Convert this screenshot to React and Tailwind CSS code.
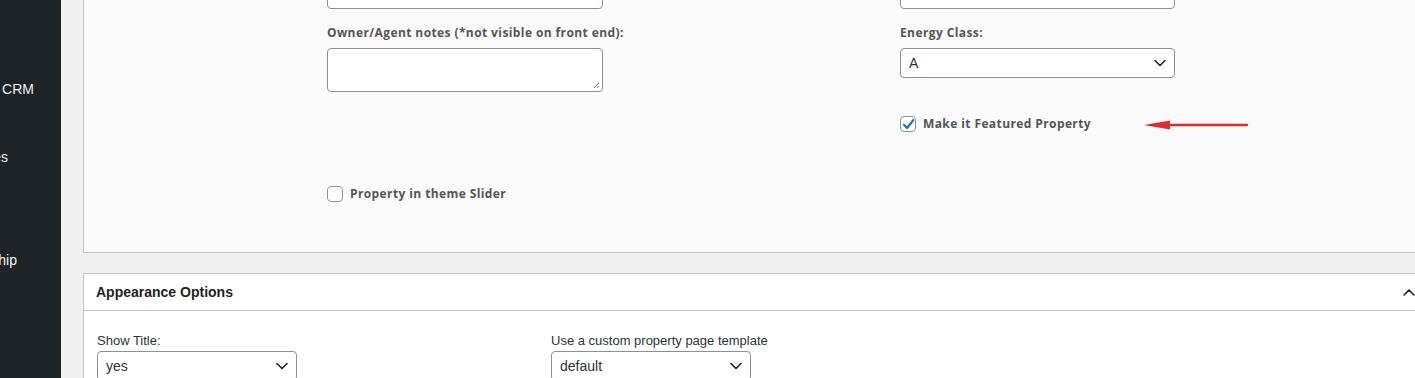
import React from "react";

const labelFont = { fontFamily: '"Open Sans", "DejaVu Sans", sans-serif' };

function Chevron({ up = false, className = "" }) {
  return (
    <svg width="12" height="8" viewBox="0 0 12 8" className={className} fill="none">
      <path
        d={up ? "M1 7 L6 2 L11 7" : "M1 1.5 L6 6.5 L11 1.5"}
        stroke="#1d2327"
        strokeWidth="1.6"
        strokeLinecap="round"
        strokeLinejoin="round"
      />
    </svg>
  );
}

function Select({ value, width }) {
  return (
    <div
      className={`${width} h-[30px] bg-white border border-[#8c8f94] rounded-[4px] flex items-center justify-between pl-[8px] pr-[8px] text-[14px] text-[#2c3338] font-['Liberation_Sans',sans-serif]`}
    >
      <span>{value}</span>
      <Chevron />
    </div>
  );
}

function Checkbox({ checked, label }) {
  return (
    <label className="flex items-center gap-[7px]">
      <span className="w-[16px] h-[16px] bg-white border border-[#8c8f94] rounded-[4px] flex items-center justify-center">
        {checked && (
          <svg width="13" height="13" viewBox="0 0 13 13">
            <path
              d="M2 6.8 L5 10 L11.2 2.2"
              stroke="#2271b1"
              strokeWidth="2.2"
              fill="none"
              strokeLinecap="round"
              strokeLinejoin="round"
            />
          </svg>
        )}
      </span>
      <span className="text-[12px] font-bold tracking-[0.4px] text-[#555] leading-[14px]" style={labelFont}>
        {label}
      </span>
    </label>
  );
}

export default function App() {
  return (
    <div className="flex w-[1415px] h-[378px] overflow-hidden bg-[#f0f0f1] font-['Liberation_Sans',sans-serif]">
      {/* collapsed admin menu, text cut at the left edge */}
      <aside className="w-[61px] shrink-0 bg-[#1d2327] text-[#f0f0f1] text-[14px]">
        <div className="mt-[80px] w-[34px] h-[18px] flex justify-end overflow-hidden whitespace-nowrap leading-[18px]">
          Estate CRM
        </div>
        <div className="mt-[50px] w-[8px] h-[18px] flex justify-end overflow-hidden whitespace-nowrap leading-[18px]">
          Invoices
        </div>
        <div className="mt-[85px] w-[17px] h-[18px] flex justify-end overflow-hidden whitespace-nowrap leading-[18px]">
          Membership
        </div>
      </aside>

      <main className="flex-1 pl-[22px] overflow-hidden">
        {/* property details panel (scrolled, top cut off) */}
        <section className="relative w-[1345px] mt-[-40px] h-[293px] bg-[#fafafa] border border-[#c3c4c7] pl-[243px] pt-[16px]">
          <div className="flex gap-[298px]">
            <div className="w-[276px] flex flex-col">
              <div className="h-[32px] bg-white border border-[#8c8f94] rounded-[4px]" />
              <div className="mt-[17px] text-[12px] font-bold tracking-[0.4px] text-[#555] leading-[14px] whitespace-nowrap" style={labelFont}>
                Owner/Agent notes (*not visible on front end):
              </div>
              <div className="relative mt-[8px] w-[276px] h-[44px] bg-white border border-[#8c8f94] rounded-[4px]">
                <svg width="7" height="7" viewBox="0 0 7 7" className="absolute right-[2px] bottom-[2px]">
                  <path d="M1 6 L6 1 M4 6 L6 4" stroke="#666" strokeWidth="0.9" />
                </svg>
              </div>
              <div className="mt-[94px]">
                <Checkbox label="Property in theme Slider" />
              </div>
            </div>

            <div className="w-[275px] flex flex-col ml-[-1px]">
              <div className="h-[32px] bg-white border border-[#8c8f94] rounded-[4px]" />
              <div className="mt-[17px] text-[12px] font-bold tracking-[0.4px] text-[#555] leading-[14px] whitespace-nowrap" style={labelFont}>
                Energy Class:
              </div>
              <div className="mt-[8px]">
                <Select value="A" width="w-[275px]" />
              </div>
              <div className="mt-[38px] relative">
                <Checkbox checked label="Make it Featured Property" />
                {/* red annotation arrow */}
                <svg
                  width="106"
                  height="12"
                  viewBox="0 0 106 12"
                  className="absolute left-[243px] top-[3px]"
                >
                  <path d="M26 6 L104 6" stroke="#e02b2b" strokeWidth="2.4" strokeLinecap="round" />
                  <path d="M1 6 L27 1.5 L27 10.5 Z" fill="#e02b2b" />
                </svg>
              </div>
            </div>
          </div>
        </section>

        {/* appearance options panel */}
        <section className="w-[1345px] mt-[20px] bg-white border border-[#c3c4c7]">
          <div className="h-[37px] border-b border-[#c3c4c7] flex items-center justify-between pl-[12px]">
            <h2 className="text-[14px] font-bold text-[#1d2327]">Appearance Options</h2>
            <div className="w-[36px] flex justify-center">
              <Chevron up />
            </div>
          </div>
          <div className="flex pl-[13px] pt-[22px] text-[13px] text-[#2c3338]">
            <div className="w-[454px] flex flex-col">
              <span className="leading-[16px]">Show Title:</span>
              <div className="mt-[2px]">
                <Select value="yes" width="w-[200px]" />
              </div>
            </div>
            <div className="flex flex-col">
              <span className="leading-[16px]">Use a custom property page template</span>
              <div className="mt-[2px]">
                <Select value="default" width="w-[200px]" />
              </div>
            </div>
          </div>
        </section>
      </main>
    </div>
  );
}
